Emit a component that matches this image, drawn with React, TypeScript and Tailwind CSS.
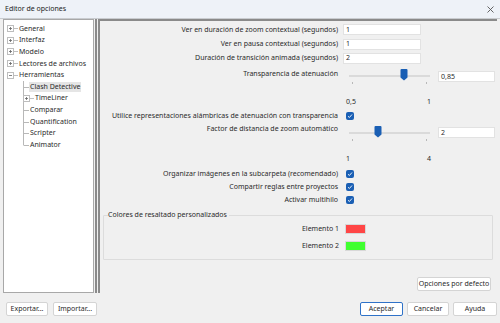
import React from 'react'

const font = { fontFamily: '"Noto Sans", "Open Sans", sans-serif' }

const PlusBox = ({ open = false }: { open?: boolean }) => (
  <svg width="11" height="9" viewBox="0 0 11 9" className="shrink-0">
    <rect x="0.5" y="1.5" width="6" height="6" fill="#fff" stroke="#bdbdbd" />
    <line x1="2" y1="4.5" x2="5" y2="4.5" stroke="#666" strokeWidth="0.8" />
    {!open && <line x1="3.5" y1="3" x2="3.5" y2="6" stroke="#666" strokeWidth="0.8" />}
    <line x1="7" y1="4.5" x2="11" y2="4.5" stroke="#c0c0c0" />
  </svg>
)

const Branch = ({ last = false }: { last?: boolean }) => (
  <svg width="9" height="12" viewBox="0 0 9 12" className="shrink-0">
    <line x1="3.5" y1="0" x2="3.5" y2={last ? 6 : 12} stroke="#b8b8b8" />
    <line x1="3.5" y1="6.5" x2="9" y2="6.5" stroke="#b8b8b8" />
  </svg>
)

const Check = () => (
  <span className="w-[8px] h-[8px] rounded-[2px] bg-[#1a5fb4] flex items-center justify-center">
    <svg width="6" height="6" viewBox="0 0 6 6">
      <path d="M1 3.2 L2.4 4.5 L5 1.5" fill="none" stroke="#fff" strokeWidth="0.9" />
    </svg>
  </span>
)

const TextBox = ({ value, w = 'w-[78px]' }: { value: string; w?: string }) => (
  <div className={`${w} h-[11px] bg-white border border-[#e2e2e2] flex items-center pl-[2px] text-[#2a2a2a]`}>
    {value}
  </div>
)

const Slider = ({ pos, min, max }: { pos: number; min: string; max: string }) => (
  <div className="w-[87px] flex flex-col">
    <div className="relative h-[13px]">
      <div className="absolute left-[3px] right-[3px] top-[6px] h-[2px] bg-[#dadada]" />
      <svg width="8" height="12" viewBox="0 0 8 12" className="absolute top-[0px]" style={{ left: pos }}>
        <path d="M0.5 1 Q0.5 0 1.5 0 H6.5 Q7.5 0 7.5 1 V8.5 L4 11.5 L0.5 8.5 Z" fill="#1a5fb4" />
      </svg>
    </div>
    <div className="flex justify-between px-[6px] h-[4px]">
      <span className="w-px h-[2px] bg-[#b8b8b8]" />
      <span className="w-px h-[2px] bg-[#b8b8b8]" />
    </div>
    <div className="flex justify-between pl-[0px] pr-[2px] mt-[11px] leading-[10px] text-[#2a2a2a]">
      <span>{min}</span>
      <span>{max}</span>
    </div>
  </div>
)

const Label = ({ children }: { children: React.ReactNode }) => (
  <div className="w-[238px] text-right text-[#2a2a2a] whitespace-nowrap">{children}</div>
)

const Btn = ({ children, w, primary = false }: { children: React.ReactNode; w: string; primary?: boolean }) => (
  <div
    className={`${w} h-[14px] bg-white rounded-[2px] border flex items-center justify-center text-[#2a2a2a] ${
      primary ? 'border-[#2f72c8]' : 'border-[#d4d4d4]'
    }`}
  >
    {children}
  </div>
)

const tree = [
  { label: 'General', kind: 'plus' },
  { label: 'Interfaz', kind: 'plus' },
  { label: 'Modelo', kind: 'plus' },
  { label: 'Lectores de archivos', kind: 'plus' },
  { label: 'Herramientas', kind: 'minus' },
]

const children = [
  { label: 'Clash Detective', selected: true },
  { label: 'TimeLiner', plus: true },
  { label: 'Comparar' },
  { label: 'Quantification' },
  { label: 'Scripter' },
  { label: 'Animator', last: true },
]

export default function App() {
  return (
    <div className="w-[500px] h-[323px] bg-[#f0f0f0] flex flex-col text-[7px] leading-[10px] overflow-hidden" style={font}>
      {/* Title bar */}
      <div className="h-[19px] shrink-0 bg-[#eef2f8] border-b border-[#c9ccd0] flex items-center justify-between pl-[5px] pr-[6px]">
        <span className="text-[#222]">Editor de opciones</span>
        <svg width="7" height="7" viewBox="0 0 7 7">
          <path d="M0.5 0.5 L6.5 6.5 M6.5 0.5 L0.5 6.5" stroke="#555" strokeWidth="0.9" />
        </svg>
      </div>

      {/* Main area */}
      <div className="flex h-[274px] pl-[3px] pr-[3px] shrink-0">
        {/* Tree */}
        <div className="w-[91px] bg-white border border-[#a8a8a8] pt-[3px] pl-[3px]">
          {tree.map(item => (
            <div key={item.label} className="h-[11.6px] flex items-center">
              <PlusBox open={item.kind === 'minus'} />
              <span className="ml-[1px] text-[#2a2a2a] whitespace-nowrap">{item.label}</span>
            </div>
          ))}
          {children.map(item => (
            <div key={item.label} className="h-[11.6px] flex items-center pl-[13px]">
              {item.plus ? (
                <>
                  <Branch />
                  <span className="-ml-[6px]">
                    <PlusBox />
                  </span>
                </>
              ) : (
                <Branch last={item.last} />
              )}
              <span className={`whitespace-nowrap text-[#2a2a2a] px-[1px] ${item.selected ? 'bg-[#e5e5e5]' : ''}`}>
                {item.label}
              </span>
            </div>
          ))}
        </div>

        {/* Splitter */}
        <div className="w-[4px] flex">
          <div className="w-px bg-[#f0f0f0]" />
          <div className="w-[2px] bg-[#8a8a8a]" />
        </div>

        {/* Options panel */}
        <div className="flex-1 border-l-2 border-t-2 border-[#8a8a8a] flex flex-col">
          <div className="flex items-center gap-[5px] h-[15px] mt-[1px]">
            <Label>Ver en duración de zoom contextual (segundos)</Label>
            <TextBox value="1" />
          </div>
          <div className="flex items-center gap-[5px] h-[14px]">
            <Label>Ver en pausa contextual (segundos)</Label>
            <TextBox value="1" />
          </div>
          <div className="flex items-center gap-[5px] h-[14px]">
            <Label>Duración de transición animada (segundos)</Label>
            <TextBox value="2" />
          </div>

          <div className="flex items-start gap-[5px] mt-[4px] h-[40px]">
            <Label>Transparencia de atenuación</Label>
            <div className="flex items-start gap-[5px] pl-[3px]">
              <Slider pos={54} min="0,5" max="1" />
              <div className="mt-[2px]">
                <TextBox value="0,85" w="w-[57px]" />
              </div>
            </div>
          </div>

          <div className="flex items-center gap-[5px] h-[14px]">
            <Label>Utilice representaciones alámbricas de atenuación con transparencia</Label>
            <div className="pl-[3px]">
              <Check />
            </div>
          </div>

          <div className="flex items-start gap-[5px] mt-[1px] h-[42px]">
            <Label>Factor de distancia de zoom automático</Label>
            <div className="flex items-start gap-[5px] pl-[3px] pt-[2px]">
              <Slider pos={28} min="1" max="4" />
              <div className="mt-[1px]">
                <TextBox value="2" w="w-[57px]" />
              </div>
            </div>
          </div>

          <div className="flex items-center gap-[5px] h-[13px] mt-[1px]">
            <Label>Organizar imágenes en la subcarpeta (recomendado)</Label>
            <div className="pl-[3px]">
              <Check />
            </div>
          </div>
          <div className="flex items-center gap-[5px] h-[13px]">
            <Label>Compartir reglas entre proyectos</Label>
            <div className="pl-[3px]">
              <Check />
            </div>
          </div>
          <div className="flex items-center gap-[5px] h-[13px]">
            <Label>Activar multihilo</Label>
            <div className="pl-[3px]">
              <Check />
            </div>
          </div>

          {/* Group box */}
          <div className="relative mt-[9px] ml-[3px] mr-[4px] h-[45px] border border-[#dcdcdc] rounded-[1px] flex flex-col pt-[4px]">
            <span className="absolute -top-[6px] left-[4px] bg-[#f0f0f0] pr-[2px] text-[#2a2a2a]">
              Colores de resaltado personalizados
            </span>
            <div className="flex items-center gap-[6px] h-[17px]">
              <div className="w-[235px] text-right text-[#2a2a2a]">Elemento 1</div>
              <span className="w-[21px] h-[10px] bg-[#ff4646] border border-[#d8d8d8]" />
            </div>
            <div className="flex items-center gap-[6px] h-[17px]">
              <div className="w-[235px] text-right text-[#2a2a2a]">Elemento 2</div>
              <span className="w-[21px] h-[10px] bg-[#40ff30] border border-[#d8d8d8]" />
            </div>
          </div>

          <div className="flex justify-end pr-[6px] mt-[17px]">
            <Btn w="w-[74px]">Opciones por defecto</Btn>
          </div>
        </div>
      </div>

      {/* Bottom buttons */}
      <div className="flex items-center pt-[9px] pl-[6px] pr-[3px]">
        <Btn w="w-[42px]">Exportar...</Btn>
        <div className="ml-[5px]">
          <Btn w="w-[44px]">Importar...</Btn>
        </div>
        <div className="flex-1" />
        <div className="flex gap-[4px]">
          <Btn w="w-[43px]" primary>
            Aceptar
          </Btn>
          <Btn w="w-[42px]">Cancelar</Btn>
          <Btn w="w-[44px]">Ayuda</Btn>
        </div>
      </div>
    </div>
  )
}
